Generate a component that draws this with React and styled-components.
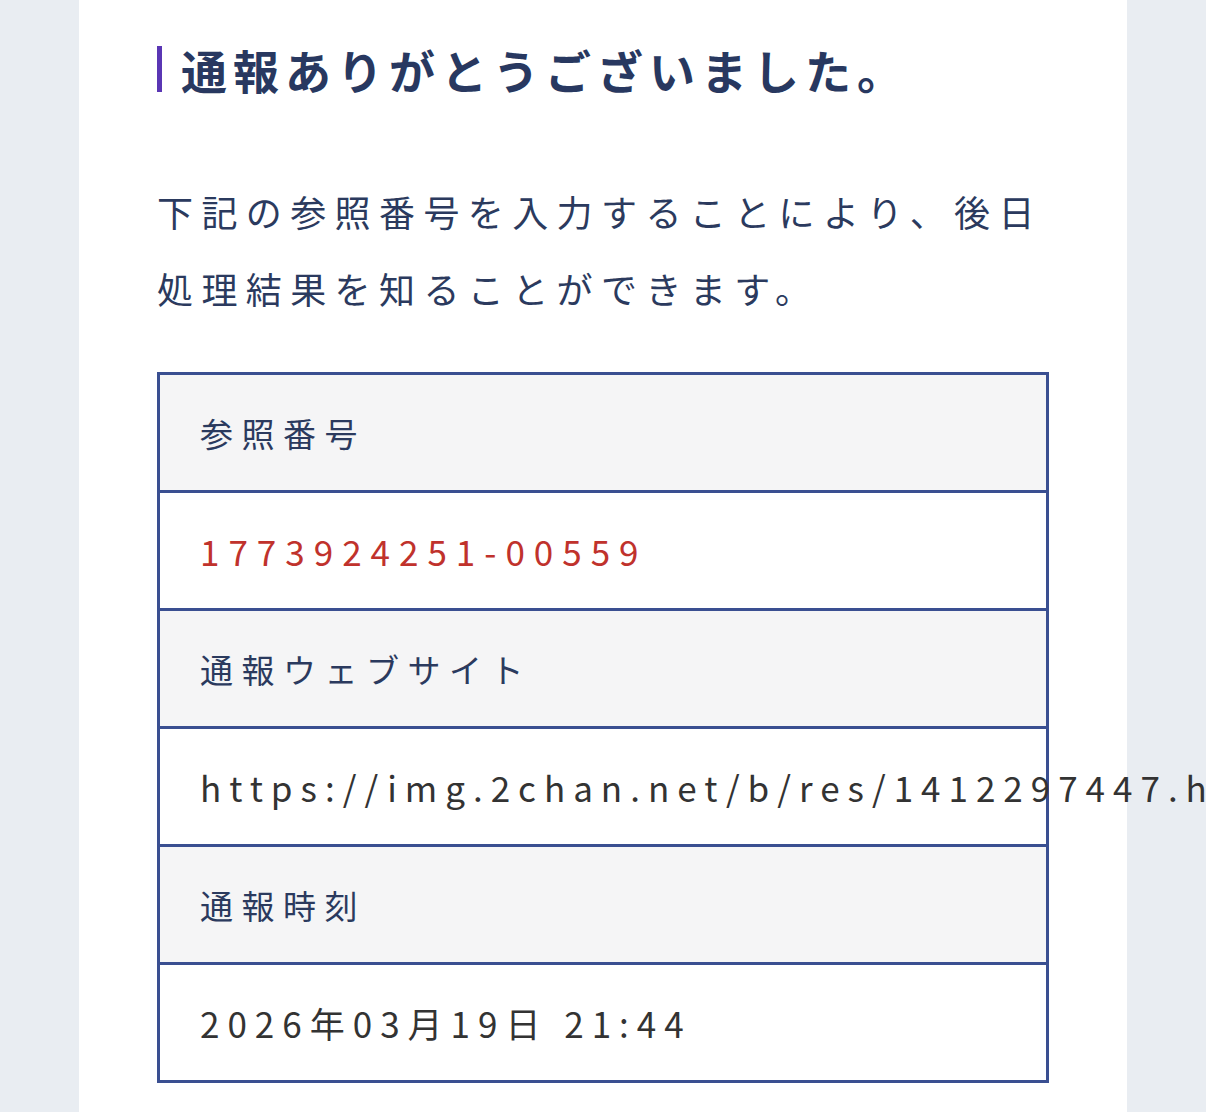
import styled, { createGlobalStyle } from 'styled-components';

const GlobalStyle = createGlobalStyle`
    html, body {
        margin: 0;
        padding: 0;
        background-color: #e9edf2;
        font-family: "Noto Sans CJK JP", "Noto Sans", sans-serif;
        overflow: hidden;
    }
`;

const ROWS = [
    { label: '参照番号', value: '1773924251-00559', highlight: true },
    { label: '通報ウェブサイト', value: 'https://img.2chan.net/b/res/1412297447.htm' },
    { label: '通報時刻', value: '2026年03月19日 21:44' },
];

const App = () => {
    return (
        <>
            <GlobalStyle />
            <Page>
                <Panel>
                    <Title>通報ありがとうございました。</Title>

                    <Lead>
                        下記の参照番号を入力することにより、後日処理結果を知ることができます。
                    </Lead>

                    <InfoTable>
                        {ROWS.map((row) => (
                            <div key={row.label}>
                                <Cell $head>{row.label}</Cell>
                                <Cell $red={row.highlight}>{row.value}</Cell>
                            </div>
                        ))}
                    </InfoTable>
                </Panel>
            </Page>
        </>
    );
};

export default App;

const Page = styled.div`
    height: 1112px;
    padding: 0 79px;
`;

const Panel = styled.main`
    height: 100%;
    background-color: #ffffff;
    padding: 37px 78px 0;
    box-sizing: border-box;
`;

const Title = styled.h1`
    margin: 0;
    display: flex;
    align-items: center;
    font-size: 46px;
    font-weight: 700;
    line-height: 64px;
    letter-spacing: 6px;
    color: #283860;

    &::before {
        content: '';
        width: 5px;
        height: 46px;
        margin-right: 19px;
        background-color: #5a36b4;
    }
`;

const Lead = styled.p`
    margin: 72px 0 0;
    font-size: 36px;
    line-height: 77px;
    letter-spacing: 8.4px;
    color: #2b3a5e;
`;

const InfoTable = styled.div`
    margin-top: 45px;
    border: 3px solid #3a4f91;
    border-bottom: 0;
`;

const Cell = styled.div`
    display: flex;
    align-items: center;
    height: 115px;
    padding: 0 40px;
    border-bottom: 3px solid #3a4f91;
    background-color: ${(props) => (props.$head ? '#f5f5f6' : '#ffffff')};
    color: ${(props) => (props.$head ? '#2b3a5e' : props.$red ? '#c0322c' : '#333333')};
    font-size: ${(props) => (props.$head ? '33px' : '35px')};
    letter-spacing: ${(props) => (props.$head ? '8.5px' : props.$red ? '9px' : '8px')};
    white-space: nowrap;
`;
